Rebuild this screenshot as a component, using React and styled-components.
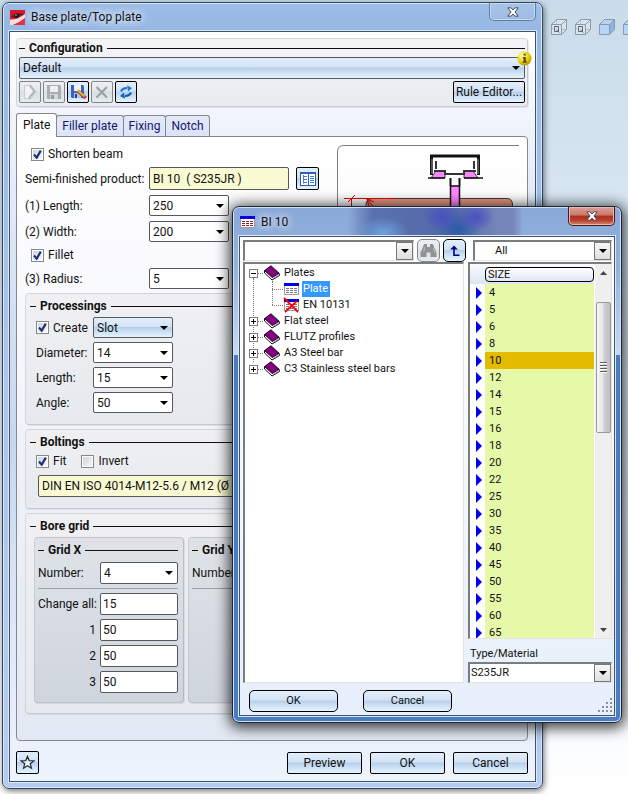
import React from "react";
import styled, { createGlobalStyle, css } from "styled-components";

const GlobalStyle = createGlobalStyle`
  * { box-sizing: border-box; }
  body {
    margin: 0;
    font-family: Roboto, "Open Sans", sans-serif;
    font-size: 12px;
    line-height: 16px;
    color: #111;
  }
  button, select, input { font: inherit; color: inherit; margin: 0; }
  button, select { cursor: pointer; }
`;

const glossy = "linear-gradient(#e2effa 0, #d3e2f5 45%, #b7cfea 50%, #cfe3f6 75%, #e4f4fe 100%)";

/* ---------- desktop ---------- */

const Desktop = styled.div`
  position: relative;
  display: grid;
  grid-template-columns: minmax(0, 1fr) 85px;
  align-items: start;
  min-height: 100vh;
  padding: 2px 0 4px 2px;
  overflow: hidden;
  background: linear-gradient(#cadcea 0, #d6e5f1 25%, #eef4fb 75%, #ffffff 100%);
`;

const ViewBar = styled.div`
  display: flex;
  gap: 6px;
  padding: 16px 0 0 7px;
  overflow: hidden;
  svg { flex: none; }
`;

/* ---------- window frames ---------- */

const Window = styled.section`
  border: 1px solid #36485f;
  border-radius: 7px;
  padding: 0 6px 6px;
  background: linear-gradient(#9dbce8 0, #97b8e4 28px, #a9c6ec 45%, #b5ccf0 100%);
  box-shadow: inset 0 0 0 1px #d6e6f8, 1px 2px 6px rgba(0, 0, 0, 0.55);
`;

const Dialog = styled(Window)`
  position: absolute;
  top: 206px;
  left: 232px;
  right: 6px;
  border-color: #1c2838;
  background:
    radial-gradient(ellipse 26px 16px at 150px 26px, #6ba3de 0, transparent 100%),
    radial-gradient(ellipse 18px 14px at 209px 10px, #4b4fc0 0, transparent 100%),
    radial-gradient(ellipse 18px 14px at 243px 10px, #4b4fc0 0, transparent 100%),
    radial-gradient(ellipse 22px 18px at 225px 22px, #2a5ca8 0, transparent 100%),
    linear-gradient(90deg, rgba(91, 112, 174, 0) 115px, #5b70ae 140px, #5268a8 220px, #7686b8 265px, #7686b8 280px, rgba(118, 134, 184, 0) 290px) 0 0 / 100% 30px no-repeat,
    linear-gradient(#8aa9d8 0, #94b1dd 60px, #c9daf1 148px, #4a7cc4 148px, #4a7cc4 100%);
  box-shadow: inset 0 0 0 1px #cfe0f6, 0 2px 14px 3px rgba(0, 0, 0, 0.75);
`;

const TitleBar = styled.header`
  display: flex;
  align-items: center;
  gap: 6px;
  height: ${(p) => p.$height};
  padding-left: 1px;
`;

const WindowTitle = styled.h1`
  flex: 1;
  margin: 0;
  font-size: 12px;
  font-weight: 400;
  text-shadow: 0 0 8px #fff, 0 0 10px #fff;
`;

const CloseButton = styled.button`
  align-self: flex-start;
  display: flex;
  align-items: center;
  justify-content: center;
  width: 47px;
  height: 18px;
  padding: 0;
  border: 1px solid #64809f;
  border-top: 0;
  border-radius: 0 0 5px 5px;
  background: linear-gradient(#a9c3e7, #9dbbe4);
  box-shadow: inset 0 0 0 1px #c3d8f2;
  ${(p) => p.$danger && css`
    height: 19px;
    border-color: #4c1a1c;
    background: linear-gradient(#dda095 0, #c9796d 45%, #ae2f1e 50%, #b9412f 75%, #d78a77 100%);
    box-shadow: inset 0 0 0 1px #e9b8ae;
  `}
`;

const WindowBody = styled.div`
  border: 1px solid #41536b;
  box-shadow: 0 0 0 1px #d9e8fa;
`;

const MainBody = styled(WindowBody)`
  padding: 6px 7px 7px 6px;
  background: linear-gradient(#ffffff 0, #eff3fb 13%, #d9e4f4 30%, #c8d7ed 55%, #dfe8f6 80%, #eef4fc 100%);
`;

/* ---------- grouping ---------- */

const Group = styled.fieldset`
  min-width: 0;
  margin: 0;
  border: 1px solid rgba(120, 130, 150, 0.2);
  border-right-color: rgba(120, 130, 150, 0.35);
  border-bottom-color: rgba(120, 130, 150, 0.35);
  border-radius: 4px;
  padding: ${(p) => p.$pad || "3px 4px 11px"};
  background: ${(p) => p.$fill || "linear-gradient(#f0f0f2, #e6e9ee)"};
  box-shadow: 1px 1px 0 rgba(120, 130, 150, 0.16);
`;

const GroupHead = styled.div`
  display: flex;
  align-items: center;
  gap: 4px;
  height: 18px;
  font-weight: 700;
  white-space: nowrap;
  &::before { content: ""; width: 6px; height: 1px; background: #111; }
  &::after { content: ""; flex: 1; height: 1px; background: #111; }
`;

const GroupBody = styled.div`
  display: flex;
  flex-direction: column;
  gap: ${(p) => p.$gap || "4px"};
  padding: ${(p) => p.$pad || "2px 0 0 6px"};
`;

/* ---------- controls ---------- */

const Row = styled.div`
  display: flex;
  align-items: center;
  gap: ${(p) => p.$gap || "0"};
  padding-left: ${(p) => p.$indent || "0"};
`;

const Label = styled.label`
  flex: none;
  width: ${(p) => p.$width || "auto"};
  padding-right: ${(p) => (p.$right ? "4px" : "0")};
  text-align: ${(p) => (p.$right ? "right" : "left")};
  white-space: nowrap;
`;

const SelectShell = styled.span`
  position: relative;
  display: block;
  flex: ${(p) => (p.$width ? "none" : "1")};
  width: ${(p) => p.$width || "auto"};
  &::after {
    content: "";
    position: absolute;
    right: 5px;
    top: 50%;
    margin-top: -2px;
    border: 4px solid transparent;
    border-top-color: #000;
    border-bottom: 0;
    pointer-events: none;
  }
`;

const SelectBox = styled.select`
  display: block;
  appearance: none;
  width: 100%;
  height: ${(p) => p.$height || "21px"};
  padding: 0 16px 0 3px;
  border: 1px solid #55585e;
  border-radius: 2px;
  background: ${(p) => (p.$glossy ? glossy : "#fff")};
`;

const Field = styled.input`
  flex: ${(p) => (p.$width ? "none" : "1")};
  width: ${(p) => p.$width || "auto"};
  min-width: 0;
  height: ${(p) => p.$height || "22px"};
  padding: 0 2px;
  border: 1px solid #55585e;
  border-radius: 2px;
  background: #fff;
`;

const ProductField = styled(Field)`
  padding: 0 3px;
  background: #fafad2;
`;

const CheckLabel = styled.label`
  display: flex;
  align-items: center;
  gap: 4px;
  height: ${(p) => p.$height || "20px"};
  width: ${(p) => p.$width || "auto"};
  padding-left: ${(p) => p.$indent || "0"};
`;

const CheckBox = styled.input`
  appearance: none;
  display: block;
  flex: none;
  width: 13px;
  height: 13px;
  margin: 0;
  border: 1px solid #85888e;
  background: linear-gradient(135deg, #d2d4d8, #f6f6f6) content-box, #fff;
  padding: 1px;
  &:checked {
    background:
      url("data:image/svg+xml,%3Csvg xmlns='http://www.w3.org/2000/svg' width='11' height='11'%3E%3Cpath d='M2 5.5 L4.7 8.6 L8.8 1.6' fill='none' stroke='%2318307c' stroke-width='2.1'/%3E%3C/svg%3E") center no-repeat,
      linear-gradient(135deg, #d2d4d8, #f6f6f6) content-box,
      #fff;
  }
`;

const GlossButton = styled.button`
  width: ${(p) => p.$width};
  height: 22px;
  padding: 0;
  border: 1px solid #000;
  border-radius: ${(p) => p.$radius || "2px"};
  background: ${glossy};
  white-space: nowrap;
`;

const IconButton = styled(GlossButton)`
  display: flex;
  flex: none;
  align-items: center;
  justify-content: center;
  width: ${(p) => p.$size || "22px"};
  height: ${(p) => p.$size || "22px"};
  &:disabled {
    border-color: #7f858c;
    background: linear-gradient(#eceff3 0, #e4e8ed 45%, #d9dee5 50%, #e6ebf0 100%);
  }
`;

const Spacer = styled.span`flex: 1;`;

const ConfigSelect = styled.div`
  position: relative;
  display: flex;
  margin-bottom: 2px;
`;

const InfoBadge = styled.span`
  position: absolute;
  top: -6px;
  right: -7px;
  height: 15px;
  svg { display: block; }
`;

/* ---------- tabs ---------- */

const TabBar = styled.div`
  display: flex;
  align-items: flex-end;
  height: 23px;
  margin-top: 6px;
`;

const Tab = styled.button`
  height: 21px;
  margin-left: -1px;
  padding: 0 5px;
  border: 1px solid #85888e;
  border-bottom: 0;
  border-radius: 3px 3px 0 0;
  background: linear-gradient(#e3e8f5, #dbe4fb);
  color: #15156e;
  white-space: nowrap;
  ${(p) => p.$active && css`
    position: relative;
    height: 24px;
    margin: 0 0 -1px;
    padding: 0 6px 2px;
    background: #fff;
    color: #111;
  `}
`;

const TabPanel = styled.div`
  display: flex;
  flex-direction: column;
  gap: 4px;
  border: 1px solid #85888e;
  border-radius: 0 4px 4px 4px;
  padding: 7px 8px 26px;
  background: linear-gradient(#ffffff 0, #f7f8fb 30%, #edf1f7 60%, #e3e9f4 100%);
`;

const PlateArea = styled.div`
  display: grid;
  grid-template-columns: 294px minmax(0, 1fr);
  gap: 18px;
  height: 145px;
`;

const PlateForm = styled.div`
  display: flex;
  flex-direction: column;
  gap: 3px;
`;

const SizeRows = styled.div`
  display: flex;
  flex-direction: column;
  gap: 5px;
  padding-top: 2px;
`;

const Preview = styled.div`
  overflow: hidden;
  padding-top: 1px;
  svg { display: block; }
`;

const SubGroups = styled.div`
  display: grid;
  grid-template-columns: repeat(2, 150px);
  gap: 4px;
  padding: 2px 0 0 4px;
`;

const Rule = styled.hr`
  width: 100%;
  height: 1px;
  margin: 0;
  border: 0;
  background: #9a9da3;
`;

const Footer = styled.footer`
  display: flex;
  align-items: center;
  gap: 8px;
  padding-top: 10px;
`;

/* ---------- catalogue dialog ---------- */

const CatalogBody = styled(WindowBody)`
  padding: 2px 2px 3px 3px;
  font-size: 11px;
  line-height: 14px;
  background: linear-gradient(#ffffff 0, #f3f7fc 50%, #e6effb 100%);
`;

const CatalogTools = styled.div`
  display: flex;
  align-items: center;
  gap: 3px;
  height: 23px;
`;

const sunken = css`
  border: 1px solid #e3e3e3;
  border-top: 2px solid #7a7d80;
  border-left: 2px solid #7a7d80;
`;

const ClassicSelect = styled(SelectBox)`
  ${sunken}
  height: 21px;
  border-radius: 0;
  padding: 0 18px 0 ${(p) => p.$indent || "1px"};
  background:
    linear-gradient(#f7f7f7, #dedede) right 1px center / 15px 16px no-repeat,
    linear-gradient(#777, #777) right 0 center / 17px 18px no-repeat,
    #fff;
`;

const CatalogGrid = styled.div`
  display: grid;
  grid-template-columns: minmax(0, 1fr) 144px;
  gap: 4px;
`;

const Tree = styled.ul`
  ${sunken}
  position: relative;
  margin: 0;
  padding: 1px 0 0 4px;
  list-style: none;
  background: #fff;
  &::before {
    content: "";
    position: absolute;
    left: 8px;
    top: 14px;
    height: 84px;
    border-left: 1px dotted #777;
  }
`;

const Branch = styled.ul`
  position: relative;
  margin: 0;
  padding: 0 0 0 23px;
  list-style: none;
  &::before {
    content: "";
    position: absolute;
    left: 23px;
    top: 0;
    height: 24px;
    border-left: 1px dotted #777;
  }
`;

const TreeRow = styled.div`
  position: relative;
  display: flex;
  align-items: center;
  height: 16px;
  svg { flex: none; }
`;

const Toggle = styled.button`
  display: block;
  width: 9px;
  height: 9px;
  padding: 0;
  border: 1px solid #7d7d7d;
  background:
    linear-gradient(#000, #000) center / 5px 1px no-repeat,
    ${(p) => (p.$open ? "" : "linear-gradient(#000, #000) center / 1px 5px no-repeat,")}
    #fff;
`;

const Connector = styled.span`
  width: ${(p) => p.$width};
  margin-right: 1px;
  border-top: 1px dotted #777;
`;

const TreeText = styled.button`
  height: 16px;
  margin-left: 3px;
  padding: 0 2px 0 1px;
  border: 0;
  background: ${(p) => (p.$selected ? "#3399ff" : "transparent")};
  color: ${(p) => (p.$selected ? "#fff" : "#111")};
  white-space: nowrap;
`;

const SideColumn = styled.div`
  display: flex;
  flex-direction: column;
`;

const ListBox = styled.div`
  ${sunken}
  display: flex;
  height: 377px;
  overflow: hidden;
  background: #fff;
`;

const SizeTable = styled.table`
  flex: 1;
  align-self: flex-start;
  border-collapse: collapse;
  th, td { padding: 0; text-align: left; font-weight: 400; }
  thead tr { height: 20px; background: linear-gradient(#fafcfe, #dbe6f3); }
`;

const HeadButton = styled.button`
  display: block;
  width: 100%;
  height: 15px;
  padding: 0 2px;
  border: 1px solid #000;
  border-radius: 4px;
  background: linear-gradient(#fff, #dfe8f3);
  line-height: 13px;
  text-align: left;
`;

const SizeRow = styled.tr`
  height: 17px;
  td:first-child { width: 15px; padding-left: 6px; }
  td:last-child {
    padding-left: 4px;
    background: ${(p) => (p.$selected ? "#e4bb00" : "#e6f9a8")};
  }
  svg { display: block; }
`;

const ScrollTrack = styled.div`
  display: flex;
  flex-direction: column;
  align-items: center;
  width: 17px;
  border-left: 1px solid #fff;
  background: #efefef;
`;

const ScrollArrow = styled.span`
  display: flex;
  align-items: center;
  justify-content: center;
  height: 17px;
`;

const ScrollThumb = styled.div`
  display: flex;
  flex-direction: column;
  align-items: center;
  justify-content: center;
  gap: 1px;
  width: 15px;
  height: 131px;
  margin: 21px 0 auto;
  border: 1px solid #9a9a9a;
  border-radius: 2px;
  background: linear-gradient(90deg, #f5f5f5, #e6e6e6 45%, #cfcfd2 55%, #bfbfc4);
  i { width: 7px; height: 2px; background: linear-gradient(#5c5c5c 50%, #fff 50%); }
`;

const MaterialLabel = styled.label`
  height: 23px;
  padding: 8px 0 0 2px;
`;

const CatalogFooter = styled.div`
  display: flex;
  align-items: center;
  gap: 25px;
  padding: 7px 0 0 6px;
`;

const Grip = styled.svg`
  align-self: flex-end;
  margin-left: auto;
`;

/* ---------- drawings ---------- */

const AppIcon = () => (
  <svg width="15" height="15" viewBox="0 0 15 15">
    <rect width="15" height="15" fill="#dc1428" />
    <path d="M0 9.5 Q7 10 15 4 V8 Q9 13 3 15 H0Z" fill="#f6dede" />
    <path d="M3 15 Q10 13 15 8 V15Z" fill="#e23444" />
    <path d="M1 7 Q4 3 8 3.2 L14 4 L10 6 L4 7.6Z" fill="#5a2026" />
    <circle cx="6.8" cy="5.8" r="2.4" fill="#1c1c20" />
    <circle cx="6" cy="5" r=".8" fill="#ccc" />
  </svg>
);

const CloseGlyph = () => (
  <svg width="12" height="10" viewBox="0 0 12 10">
    <path d="M.8.8 H4 L6 3 L8 .8 H11.2 L8 5 L11.2 9.2 H8 L6 7 L4 9.2 H.8 L4 5Z" fill="#fff" stroke="#474c56" strokeWidth="1" />
  </svg>
);

const Cube = ({ solid }) => (
  <svg width="18" height="18" viewBox="0 0 18 18">
    <path d="M1.5 6.5 L6.5 1.5 H16.5 V11.5 L11.5 16.5 H1.5Z" fill={solid ? "#b7d3f8" : "#d8e5ef"} stroke="#8a9aa8" />
    {solid && <path d="M12 6.5 L16 2.5 V11 L12 15.5Z" fill="#8cb2e6" />}
    <path d="M1.5 6.5 H11.5 V16.5 M11.5 6.5 L16.5 1.5" fill="none" stroke="#8a9aa8" />
    {!solid && <path d="M6.5 1.5 V6 M1.5 11 L3 10 M12 11.5 H16" fill="none" stroke="#b3c0cb" />}
    {!solid && <path d="M4.5 8.5 H8.5 V13.5 H4.5Z M6.5 12 L9.5 14.5" fill="none" stroke="#5b6670" />}
  </svg>
);

const InfoIcon = () => (
  <svg width="15" height="15" viewBox="0 0 15 15">
    <defs>
      <radialGradient id="gold" cx=".35" cy=".3" r=".8">
        <stop offset="0" stopColor="#fffbb0" />
        <stop offset=".5" stopColor="#f2d800" />
        <stop offset="1" stopColor="#a88a00" />
      </radialGradient>
    </defs>
    <circle cx="7.5" cy="7.5" r="7" fill="url(#gold)" />
    <path d="M6.6 2.8 H8.8 V4.6 H6.6Z M5.8 6 H8.8 V10.5 H9.8 V11.8 H5.6 V10.5 H6.6 V7.2 H5.8Z" fill="#4a4a4a" />
  </svg>
);

const NewIcon = () => (
  <svg width="16" height="16" viewBox="0 0 16 16">
    <path d="M2.5 1.5 H9 L13.5 8 L9 14.5 H2.5Z" fill="#f2f2f4" stroke="#c6c9cd" />
    <path d="M8 1.5 L12.5 7.5 L7 14" fill="none" stroke="#b2b5ba" strokeWidth="2" />
  </svg>
);

const SaveIcon = () => (
  <svg width="16" height="16" viewBox="0 0 16 16">
    <path d="M1 1 H14 L15 2 V15 H2 L1 14Z" fill="#a9acb1" />
    <rect x="4" y="2" width="8" height="6" fill="#eceef0" />
    <rect x="4" y="10" width="8" height="5" fill="#d5d7da" />
    <rect x="5" y="11" width="3" height="4" fill="#96999e" />
  </svg>
);

const SaveAsIcon = () => (
  <svg width="17" height="16" viewBox="0 0 17 16">
    <path d="M1 1 H13 L14 2 V14 H2 L1 13Z" fill="#3a62c4" />
    <rect x="4" y="1" width="7" height="6" fill="#eef3fb" />
    <rect x="4" y="9" width="7" height="5" fill="#b4c8ee" />
    <rect x="5" y="10" width="2" height="4" fill="#20408f" />
    <path d="M7.500 6.500 L15 13.500" stroke="#8c4a10" strokeWidth="3.400" />
    <path d="M7.500 6 L14.500 12.500" stroke="#f4b33c" strokeWidth="2" />
    <path d="M5.500 4.200 L9 5.400 L6.600 7.800Z" fill="#f4e2c4" />
    <path d="M14 14.600 L16.400 12.400" stroke="#c83c3c" strokeWidth="1.600" />
  </svg>
);

const DeleteIcon = () => (
  <svg width="16" height="16" viewBox="0 0 16 16">
    <path d="M2.5 3 L13 13.5 M13 3 L2.5 13.5" stroke="#9b9ea3" strokeWidth="2" />
  </svg>
);

const RefreshIcon = () => (
  <svg width="16" height="16" viewBox="0 0 16 16">
    <path d="M3 7.500 Q4.500 4 9 4.200" fill="none" stroke="#1f78d2" strokeWidth="2.200" />
    <path d="M9 1.200 L14 4 L10 7.400Z" fill="#1f78d2" />
    <path d="M13 8.500 Q11.500 12 7 11.800" fill="none" stroke="#165fae" strokeWidth="2.200" />
    <path d="M7 14.800 L2 12 L6 8.600Z" fill="#165fae" />
  </svg>
);

const CatalogIcon = () => (
  <svg width="16" height="16" viewBox="0 0 16 16">
    <rect x=".5" y="1.5" width="15" height="13" fill="#fff" stroke="#2c5aa8" />
    <rect x="1" y="1" width="14" height="2" fill="#2f62b8" />
    <path d="M8.5 3 V14" stroke="#2c5aa8" />
    <path d="M3.5 4 V12.5 M3.5 5.5 H7 M3.5 8.5 H7 M3.5 11.5 H7 M10 5.5 H14 M10 7.5 H14 M10 9.5 H14 M10 11.5 H14" stroke="#3d7be0" />
  </svg>
);

const StarIcon = () => (
  <svg width="15" height="15" viewBox="0 0 15 15">
    <path d="M7.5 1.4 L9.2 5.6 L13.7 5.9 L10.3 8.8 L11.4 13.2 L7.5 10.8 L3.6 13.2 L4.7 8.8 L1.3 5.9 L5.8 5.6Z" fill="#eef5fc" stroke="#26303c" strokeWidth="1.3" />
  </svg>
);

const BinocularsIcon = () => (
  <svg width="17" height="15" viewBox="0 0 17 15">
    <path d="M4 1 H7 V4 H10 V1 H13 L14 4 L16.5 10 V14 H10.5 V9.5 H6.5 V14 H.5 V10 L3 4Z" fill="#8f9193" />
    <path d="M5 4 L3.5 9 M13.2 5 L15 10" stroke="#b8babc" />
  </svg>
);

const UpIcon = () => (
  <svg width="14" height="14" viewBox="0 0 14 14">
    <path d="M6 4 V11.2 H11.5" fill="none" stroke="#00007c" strokeWidth="1.6" />
    <path d="M6 1.5 L9.8 5.5 H2.2Z" fill="#00007c" />
  </svg>
);

const GridIcon = ({ dot = "#7a7a7a", crossed }) => (
  <svg width="15" height="14" viewBox="0 0 15 14" overflow="visible">
    <rect x=".5" y="1.5" width="14" height="11" fill="#fff" stroke="#9a9a9a" />
    <rect x="0" y="1" width="15" height="3" fill="#0000e0" />
    <path d="M2 6.5 H13 M2 8.5 H13 M2 10.5 H13" stroke={dot} strokeDasharray="3 1" />
    {crossed && <path d="M0 0 L14 14 M13 3 L1 14" stroke="#ff0000" strokeWidth="1.8" />}
  </svg>
);

const BookIcon = () => (
  <svg width="16" height="16" viewBox="0 0 16 16">
    <path d="M.5 5.5 V8 L8 15 L15.5 10.5 L15 8" fill="#fff" stroke="#111" />
    <path d="M.5 5.5 L7 .8 L15 8.2 L8.3 12.6Z" fill="#800080" stroke="#200020" />
    <path d="M9 13.8 L15 9.8" stroke="#8a8a8a" />
  </svg>
);

const Pointer = () => (
  <svg width="6" height="12" viewBox="0 0 6 12"><path d="M0 0 L6 6 L0 12Z" fill="#0000f0" /></svg>
);

const ArrowGlyph = ({ down }) => (
  <svg width="7" height="4" viewBox="0 0 7 4"><path d={down ? "M0 0 H7 L3.5 4Z" : "M0 4 H7 L3.5 0Z"} fill="#444" /></svg>
);

const ConnectionDrawing = () => (
  <svg width="186" height="144" viewBox="0 0 186 144">
    <path d="M.5 144 V7 Q.5 .5 7 .5 H185" fill="none" stroke="#7d7d7d" />
    <path d="M29 144 V60 Q29 53.5 36 53.5 H170 Q175.500 53.5 175.500 60 V144" fill="#ea9a84" stroke="#4a3a38" />
    <path d="M7 53.500 H57 M14.500 54 V144 M11 57 L18 50" stroke="#e80000" />
    <path d="M30 54 L38 64 M30 54 L37 57 M30 54 L32 61" stroke="#d00000" />
    <path d="M94 33 L99 26 H108 V33Z M141 33 L136 26 H127 V33Z" fill="#ff86ff" stroke="#111" strokeWidth=".8" />
    <path d="M91 33 H108 M127 33 H146" stroke="#111" strokeWidth="1.4" />
    <path d="M94.500 30 V11 H141.500 V30" fill="none" stroke="#111" strokeWidth="3" />
    <path d="M95 14 V29 M141 14 V29" stroke="#999" strokeWidth="1" />
    <path d="M97 26 H108 V29 H127 V26 H139 M99 16 V24 M137 16 V24" fill="none" stroke="#333" strokeWidth="2" />
    <path d="M113.500 72 V41 H122.500 V72" fill="#ff86ff" stroke="#111" strokeWidth="1.5" />
    <path d="M113.500 41 V33 M122.500 41 V33" stroke="#111" strokeWidth="2" />
  </svg>
);

/* ---------- composed parts ---------- */

function Combo({ id, value, width, height, glossyFill, label }) {
  return (
    <SelectShell $width={width}>
      <SelectBox id={id} aria-label={label} $height={height} $glossy={glossyFill} defaultValue={value}>
        <option>{value}</option>
      </SelectBox>
    </SelectShell>
  );
}

function LabeledCombo({ id, label, value, labelWidth }) {
  return (
    <Row>
      <Label htmlFor={id} $width={labelWidth}>{label}</Label>
      <Combo id={id} value={value} width="80px" />
    </Row>
  );
}

function Check({ label, checked, ...rest }) {
  return (
    <CheckLabel {...rest}>
      <CheckBox type="checkbox" defaultChecked={checked} />
      {label}
    </CheckLabel>
  );
}

function BoreSubGroup({ title, id, value, distances }) {
  return (
    <Group $pad="3px 5px 9px 3px" $fill="linear-gradient(#dfe3e8, #cfd5dd)">
      <GroupHead>{title}</GroupHead>
      <GroupBody $pad="3px 0 0">
        <Row>
          <Label htmlFor={id} $width="62px">Number:</Label>
          <Combo id={id} value={value} height="22px" />
        </Row>
        <Rule />
        {distances.map(([label, distance], index) => (
          <Row key={label}>
            <Label htmlFor={`${id}-${index}`} $width="62px" $right>{label}</Label>
            <Field id={`${id}-${index}`} defaultValue={distance} />
          </Row>
        ))}
      </GroupBody>
    </Group>
  );
}

const sizes = [4, 5, 6, 8, 10, 12, 14, 15, 16, 18, 20, 22, 25, 30, 35, 40, 45, 50, 55, 60, 65];
const families = ["Flat steel", "FLUTZ profiles", "A3 Steel bar", "C3 Stainless steel bars"];
const gridX = [["Change all:", "15"], ["1", "50"], ["2", "50"], ["3", "50"]];

function PlateWindow() {
  return (
    <Window aria-label="Base plate/Top plate">
      <TitleBar $height="28px">
        <AppIcon />
        <WindowTitle>Base plate/Top plate</WindowTitle>
        <CloseButton aria-label="Close"><CloseGlyph /></CloseButton>
      </TitleBar>
      <MainBody>
        <Group $pad="0 2px 3px" $fill="linear-gradient(#f4f4f5, #e8ebf0)">
          <GroupHead>Configuration</GroupHead>
          <ConfigSelect>
            <Combo value="Default" height="22px" glossyFill label="Configuration" />
            <InfoBadge><InfoIcon /></InfoBadge>
          </ConfigSelect>
          <Row $gap="2px">
            <IconButton aria-label="New" disabled><NewIcon /></IconButton>
            <IconButton aria-label="Save" disabled><SaveIcon /></IconButton>
            <IconButton aria-label="Save as"><SaveAsIcon /></IconButton>
            <IconButton aria-label="Delete" disabled><DeleteIcon /></IconButton>
            <IconButton aria-label="Refresh"><RefreshIcon /></IconButton>
            <Spacer />
            <GlossButton $width="72px">Rule Editor...</GlossButton>
          </Row>
        </Group>

        <TabBar role="tablist">
          <Tab role="tab" aria-selected="true" $active>Plate</Tab>
          <Tab role="tab">Filler plate</Tab>
          <Tab role="tab">Fixing</Tab>
          <Tab role="tab">Notch</Tab>
        </TabBar>

        <TabPanel role="tabpanel">
          <PlateArea>
            <PlateForm>
              <Check label="Shorten beam" checked $indent="6px" />
              <Row>
                <Label htmlFor="product" $width="124px">Semi-finished product:</Label>
                <ProductField id="product" $width="140px" $height="23px" defaultValue="BI 10  ( S235JR )" />
                <Spacer />
                <IconButton aria-label="Catalogue" $size="23px"><CatalogIcon /></IconButton>
              </Row>
              <SizeRows>
                <LabeledCombo id="length" label="(1) Length:" value="250" labelWidth="124px" />
                <LabeledCombo id="width" label="(2) Width:" value="200" labelWidth="124px" />
              </SizeRows>
              <Check label="Fillet" checked $indent="6px" />
              <LabeledCombo id="radius" label="(3) Radius:" value="5" labelWidth="124px" />
            </PlateForm>
            <Preview><ConnectionDrawing /></Preview>
          </PlateArea>

          <Group>
            <GroupHead>Processings</GroupHead>
            <GroupBody>
              <Row>
                <Check label="Create" checked $width="57px" $height="21px" />
                <Combo value="Slot" width="80px" glossyFill label="Processing type" />
              </Row>
              <LabeledCombo id="diameter" label="Diameter:" value="14" labelWidth="57px" />
              <LabeledCombo id="slot-length" label="Length:" value="15" labelWidth="57px" />
              <LabeledCombo id="angle" label="Angle:" value="50" labelWidth="57px" />
            </GroupBody>
          </Group>

          <Group>
            <GroupHead>Boltings</GroupHead>
            <GroupBody $pad="0 0 0 6px">
              <Row $gap="15px">
                <Check label="Fit" checked />
                <Check label="Invert" />
              </Row>
              <Row $indent="2px">
                <ProductField aria-label="Bolt" defaultValue="DIN EN ISO 4014-M12-5.6 / M12 (Ø 14)" />
              </Row>
            </GroupBody>
          </Group>

          <Group $pad="3px 4px 10px">
            <GroupHead>Bore grid</GroupHead>
            <SubGroups>
              <BoreSubGroup title="Grid X" id="grid-x" value="4" distances={gridX} />
              <BoreSubGroup title="Grid Y" id="grid-y" value="1" distances={[]} />
            </SubGroups>
          </Group>
        </TabPanel>

        <Footer>
          <IconButton aria-label="Favourites" $size="23px"><StarIcon /></IconButton>
          <Spacer />
          <GlossButton $width="75px">Preview</GlossButton>
          <GlossButton $width="75px">OK</GlossButton>
          <GlossButton $width="75px">Cancel</GlossButton>
        </Footer>
      </MainBody>
    </Window>
  );
}

function CatalogDialog() {
  return (
    <Dialog role="dialog" aria-label="BI 10">
      <TitleBar $height="29px">
        <GridIcon dot="#8c2020" />
        <WindowTitle>BI 10</WindowTitle>
        <CloseButton aria-label="Close dialog" $danger><CloseGlyph /></CloseButton>
      </TitleBar>
      <CatalogBody>
        <CatalogTools>
          <SelectShell><ClassicSelect aria-label="Search text"><option></option></ClassicSelect></SelectShell>
          <IconButton aria-label="Search" disabled $size="23px" $radius="5px"><BinocularsIcon /></IconButton>
          <IconButton aria-label="Up one level" $size="23px" $radius="5px"><UpIcon /></IconButton>
          <Row $indent="4px">
            <SelectShell $width="139px">
              <ClassicSelect aria-label="Filter" $indent="20px"><option>All</option></ClassicSelect>
            </SelectShell>
          </Row>
        </CatalogTools>
        <CatalogGrid>
          <Tree>
            <li>
              <TreeRow>
                <Toggle aria-label="Collapse" $open />
                <Connector $width="5px" />
                <BookIcon />
                <TreeText>Plates</TreeText>
              </TreeRow>
              <Branch>
                <li>
                  <TreeRow><Connector $width="11px" /><GridIcon /><TreeText $selected>Plate</TreeText></TreeRow>
                </li>
                <li>
                  <TreeRow><Connector $width="11px" /><GridIcon crossed /><TreeText>EN 10131</TreeText></TreeRow>
                </li>
              </Branch>
            </li>
            {families.map((name) => (
              <li key={name}>
                <TreeRow>
                  <Toggle aria-label="Expand" />
                  <Connector $width="5px" />
                  <BookIcon />
                  <TreeText>{name}</TreeText>
                </TreeRow>
              </li>
            ))}
          </Tree>
          <SideColumn>
            <ListBox>
              <SizeTable>
                <thead>
                  <tr><th aria-label="Marker" /><th><HeadButton>SIZE</HeadButton></th></tr>
                </thead>
                <tbody>
                  {sizes.map((size) => (
                    <SizeRow key={size} $selected={size === 10}>
                      <td><Pointer /></td>
                      <td>{size}</td>
                    </SizeRow>
                  ))}
                </tbody>
              </SizeTable>
              <ScrollTrack>
                <ScrollArrow><ArrowGlyph /></ScrollArrow>
                <ScrollThumb><i /><i /><i /><i /></ScrollThumb>
                <ScrollArrow><ArrowGlyph down /></ScrollArrow>
              </ScrollTrack>
            </ListBox>
            <MaterialLabel htmlFor="material">Type/Material</MaterialLabel>
            <SelectShell $width="144px">
              <ClassicSelect id="material"><option>S235JR</option></ClassicSelect>
            </SelectShell>
          </SideColumn>
        </CatalogGrid>
        <CatalogFooter>
          <GlossButton $width="89px" $radius="5px">OK</GlossButton>
          <GlossButton $width="89px" $radius="5px">Cancel</GlossButton>
          <Grip width="14" height="14" viewBox="0 0 14 14">
            <path d="M13 0 V14 M9 4 V14 M5 8 V14 M1 12 V14" stroke="#8c8f94" strokeWidth="2" strokeDasharray="2 2" />
          </Grip>
        </CatalogFooter>
      </CatalogBody>
    </Dialog>
  );
}

export default function App() {
  return (
    <>
      <GlobalStyle />
      <Desktop>
        <PlateWindow />
        <ViewBar aria-hidden="true">
          <Cube />
          <Cube />
          <Cube solid />
          <Cube solid />
        </ViewBar>
        <CatalogDialog />
      </Desktop>
    </>
  );
}
